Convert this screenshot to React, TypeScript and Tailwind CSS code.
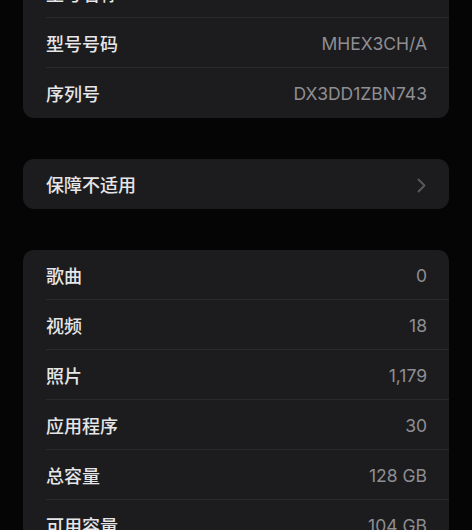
import { ReactNode } from "react";

const FONT = {
  fontFamily: '"Inter", "Noto Sans CJK SC", sans-serif',
};

interface Row {
  label: string;
  value?: string;
}

const DEVICE_ROWS: Row[] = [
  { label: "型号名称", value: "iPhone 11" },
  { label: "型号号码", value: "MHEX3CH/A" },
  { label: "序列号", value: "DX3DD1ZBN743" },
];

const MEDIA_ROWS: Row[] = [
  { label: "歌曲", value: "0" },
  { label: "视频", value: "18" },
  { label: "照片", value: "1,179" },
  { label: "应用程序", value: "30" },
  { label: "总容量", value: "128 GB" },
  { label: "可用容量", value: "104 GB" },
];

function Card({ children }: { children: ReactNode }) {
  return <div className="bg-[#1c1c1e] rounded-[11px] overflow-hidden">{children}</div>;
}

function InfoRow({ row, last }: { row: Row; last: boolean }) {
  return (
    <div className="pl-[23px]">
      <div
        className={`h-[50px] pt-[3px] flex items-center justify-between pr-[22px] ${
          last ? "" : "border-b border-[#2a2a2c]"
        }`}
      >
        <span className="text-[18px] font-medium text-[#e6e6e8]">{row.label}</span>
        <span className="text-[17.5px] text-[#8e8e93]">{row.value}</span>
      </div>
    </div>
  );
}

export default function App() {
  return (
    <div className="w-[472px] h-[530px] overflow-hidden bg-[#050505]" style={FONT}>
      <div className="-mt-[32px] pl-[23px] pr-[23px] flex flex-col">
        <Card>
          {DEVICE_ROWS.map((r, i) => (
            <InfoRow key={r.label} row={r} last={i === DEVICE_ROWS.length - 1} />
          ))}
        </Card>

        <div className="mt-[41px]">
          <Card>
            <div className="h-[50px] pt-[3px] flex items-center justify-between pl-[23px] pr-[23px]">
              <span className="text-[18px] font-medium text-[#e6e6e8]">保障不适用</span>
              <svg width="9" height="15" viewBox="0 0 9 15" fill="none" aria-hidden="true">
                <path
                  d="M1.5 1.5 7.5 7.5 1.5 13.5"
                  stroke="#5a5a5e"
                  strokeWidth="1.8"
                  strokeLinecap="round"
                  strokeLinejoin="round"
                />
              </svg>
            </div>
          </Card>
        </div>

        <div className="mt-[41px]">
          <Card>
            {MEDIA_ROWS.map((r, i) => (
              <InfoRow key={r.label} row={r} last={i === MEDIA_ROWS.length - 1} />
            ))}
          </Card>
        </div>
      </div>
    </div>
  );
}
